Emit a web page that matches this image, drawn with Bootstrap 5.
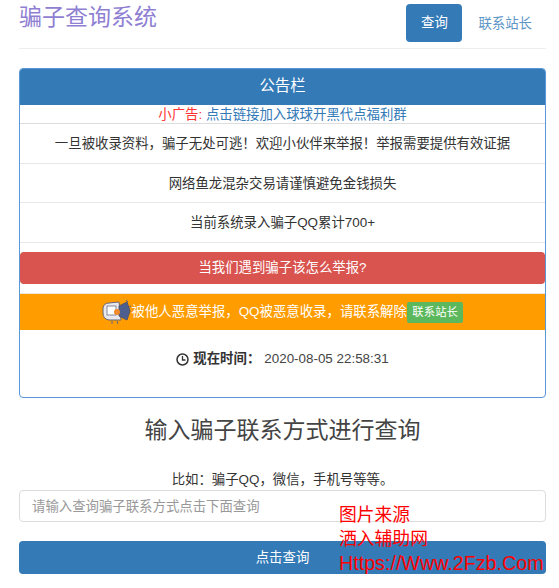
<!DOCTYPE html>
<html lang="zh-CN">
<head>
  <meta charset="UTF-8" />
  <title>骗子查询系统</title>
  <link href="https://cdn.jsdelivr.net/npm/bootstrap@5.3.3/dist/css/bootstrap.min.css" rel="stylesheet" />
  <style>
    body { font-family: "Liberation Sans", "Noto Sans CJK SC", sans-serif; font-size: 13.4px; color: #333; background: #fff; }
    .page-wrap { width: 527px; margin-left: 19px; position: relative; }
    .top-bar { height: 49px; border-bottom: 1px solid #eee; }
    .site-title { font-size: 23px; line-height: 26px; margin: 4px 0 0; color: #8f7fd3; font-weight: 400; }
    .nav-query { width: 56px; height: 38px; margin-top: 4px; background: #337ab7; color: #fff; border-radius: 4px; }
    .nav-contact { color: #5d96c6; text-decoration: none; margin: 16px 14px 0 16px; line-height: 16px; }
    .notice-card { margin-top: 19px; height: 330px; border: 1px solid #5a96d8; border-radius: 4px; overflow: hidden; }
    .notice-head { height: 37px; line-height: 36px; background: #337ab7; color: #fff; font-size: 15.4px; margin: -1px -1px 0; }
    .ad-row { height: 19px; line-height: 20px; border-bottom: 1px solid #ddd; }
    .ad-row span { color: #f33; }
    .ad-row a { color: #337ab7; text-decoration: none; }
    .info-row { height: 39.5px; line-height: 39.5px; border-bottom: 1px solid #e8e8e8; }
    .report-btn { height: 32px; line-height: 32px; margin: 9.5px 0 9px; background: #d9534f; color: #fff; border-radius: 4px; }
    .orange-bar { height: 37px; background: #ff9c00; color: #fff; border-top: 1px solid #f0e6d4; }
    .contact-tag { background: #5cb85c; color: #fff; border-radius: 2px; padding: 0 5.5px; height: 21px; line-height: 21px; font-size: 11.4px; }
    .time-row { margin-top: 20px; height: 18px; gap: 4px; }
    .time-row b { font-weight: 700; }
    .time-row .stamp { color: #444; }
    .search-title { font-size: 23px; line-height: 28px; margin: 18px 0 0; color: #444; font-weight: 400; }
    .search-hint { margin: 27px 0 0; height: 17px; line-height: 17px; }
    .search-input { height: 32px; margin-top: 2px; border: 1px solid #ddd; border-radius: 4px; font-size: 13.4px; padding: 0 12px; color: #555; }
    .search-input::placeholder { color: #999; }
    .search-btn { height: 33px; margin-top: 19px; background: #337ab7; color: #fff; border: 0; border-radius: 4px; font-size: 13.4px; padding: 2px 0 0; }
    .watermark { position: absolute; left: 320px; top: 503px; color: #f00; font-size: 17.8px; line-height: 24px; white-space: nowrap; pointer-events: none; }
    .watermark .url { font-size: 19.7px; }
  </style>
</head>
<body>

<div class="page-wrap">
  <div class="top-bar d-flex justify-content-between">
    <h3 class="site-title">骗子查询系统</h3>
    <div class="d-flex">
      <a class="nav-query d-flex align-items-center justify-content-center text-decoration-none" href="#">查询</a>
      <a class="nav-contact" href="#">联系站长</a>
    </div>
  </div>

  <div class="card notice-card text-center">
    <div class="notice-head">公告栏</div>
    <div class="ad-row"><span>小广告:</span> <a href="#">点击链接加入球球开黑代点福利群</a></div>
    <div class="info-row">一旦被收录资料，骗子无处可逃！欢迎小伙伴来举报！举报需要提供有效证据</div>
    <div class="info-row">网络鱼龙混杂交易请谨慎避免金钱损失</div>
    <div class="info-row">当前系统录入骗子QQ累计700+</div>
    <div class="report-btn">当我们遇到骗子该怎么举报?</div>
    <div class="orange-bar d-flex align-items-center justify-content-center">
      <svg width="30" height="26" viewBox="0 0 30 26" aria-hidden="true">
        <path d="M1 9 Q2 4 7 4 L17 3 L19 21 L7 21 Q1 20 1 14 Z" fill="#e8e8ee" stroke="#667" stroke-width="1"/>
        <rect x="5" y="7" width="9" height="9" fill="#fff" stroke="#889"/>
        <path d="M17 7 L25 3 L28 12 L25 21 L17 17 Z" fill="#4d5f8f" stroke="#556"/>
        <circle cx="15" cy="13" r="3" fill="#f08a2c"/>
        <path d="M24 1 L26 3 M29 7 L27 8 M10 22 L10 25 M15 22 L16 25" stroke="#667" stroke-width="1"/>
      </svg>
      <span>被他人恶意举报，QQ被恶意收录，请联系解除</span>
      <span class="contact-tag">联系站长</span>
    </div>
    <div class="time-row d-flex align-items-center justify-content-center">
      <svg width="13" height="13" viewBox="0 0 13 13" aria-hidden="true">
        <circle cx="6.5" cy="6.5" r="5.5" fill="none" stroke="#333" stroke-width="1.5"/>
        <path d="M6.5 3 V7 H9.5" fill="none" stroke="#333" stroke-width="1.3"/>
      </svg>
      <b>现在时间：</b><span class="stamp">2020-08-05 22:58:31</span>
    </div>
  </div>

  <h3 class="search-title text-center">输入骗子联系方式进行查询</h3>
  <p class="search-hint text-center">比如：骗子QQ，微信，手机号等等。</p>
  <input class="form-control search-input" type="text" placeholder="请输入查询骗子联系方式点击下面查询" />
  <button class="btn search-btn w-100" type="button">点击查询</button>

  <div class="watermark">图片来源<br />洒入辅助网<br /><span class="url">Https://Www.2Fzb.Com</span></div>
</div>

<script src="https://cdn.jsdelivr.net/npm/bootstrap@5.3.3/dist/js/bootstrap.bundle.min.js"></script>
</body>
</html>
